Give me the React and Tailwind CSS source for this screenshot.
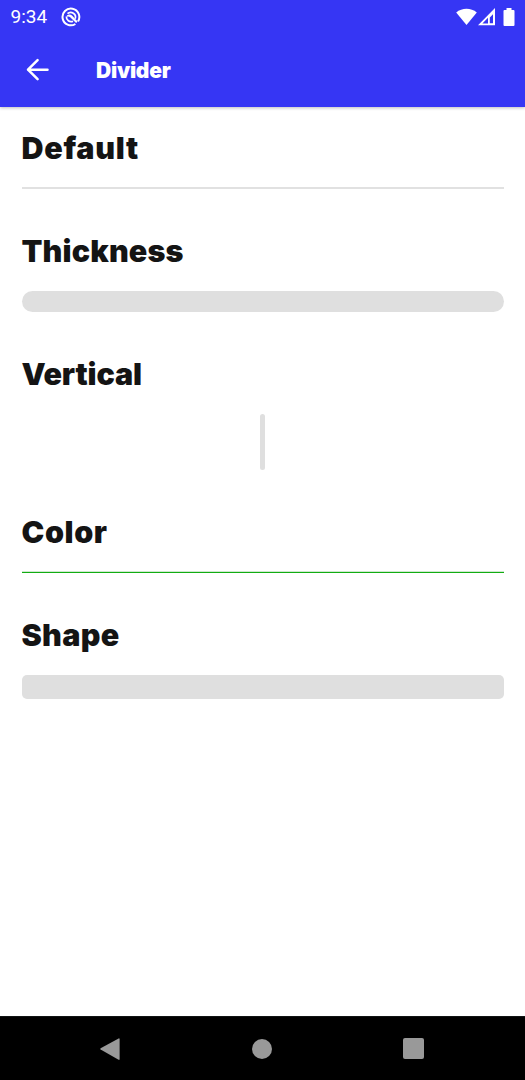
function Section({ title, spacing, className, children }) {
  return (
    <section className={className}>
      <h2 className={`mb-[19px] h-10 whitespace-nowrap text-[30.5px] leading-10 font-black text-[#141414] ${spacing}`}>{title}</h2>
      {children}
    </section>
  );
}

function StatusBar() {
  return (
    <div className="flex h-[33px] items-center justify-between pr-[10px] pl-[10.5px] font-['Roboto',sans-serif] text-white">
      <div className="flex items-center gap-[14px]">
        <span className="text-[19px] leading-[33px]">9:34</span>
        <svg className="h-5 w-5" viewBox="0 0 20 20" fill="none" stroke="currentColor">
          <path d="M14.4 17A8.4 8.4 0 1 1 17 14.4" strokeWidth="2" />
          <path d="M12 14.2A4.7 4.7 0 0 1 5.4 9.5M6.5 6.6A4.8 4.8 0 0 1 14.2 11.8" strokeWidth="1.7" />
          <path d="M5.8 8.6Q8.6 6.4 11 8.6L16.6 14.6L15.1 16.1L9.2 10.3Q7.6 8.9 5.8 9.8Z" fill="currentColor" stroke="none" />
        </svg>
      </div>
      <div className="flex items-center">
        <svg className="h-[18px] w-[22px]" viewBox="0 0 22 18" fill="currentColor">
          <path d="M.2 4.5C6-.5 15-.5 20.8 4.5L10.5 17Z" />
        </svg>
        <svg className="h-[18px] w-[18px]" viewBox="0 0 18 18" fill="currentColor" fillRule="evenodd">
          <path d="M0 17.2L17 0V17.2ZM4.4 15.4H10V9.7ZM11.8 15.2H15V6.3L11.8 9.5Z" />
        </svg>
        <svg className="ml-[7px] h-[18px] w-[12px]" viewBox="0 0 12 18" fill="currentColor">
          <path d="M3.5 0H8.5V2H10.5Q11.5 2 11.5 3V17Q11.5 18 10.5 18H1.5Q.5 18 .5 17V3Q.5 2 1.5 2H3.5Z" />
        </svg>
      </div>
    </div>
  );
}

export default function App() {
  return (
    <div className="flex h-[1080px] w-[525px] flex-col overflow-hidden bg-white font-['Inter',sans-serif]">
      <header className="h-[107px] shrink-0 bg-[#3636f4] text-white shadow-[0_1px_3px_rgba(0,0,0,0.25)]">
        <StatusBar />
        <div className="flex h-[74px] items-center pl-[26px]">
          <button aria-label="Back" className="block h-6 w-6">
            <svg className="h-6 w-6" viewBox="0 0 24 24" fill="none" stroke="currentColor" strokeWidth="2.5" strokeLinecap="round" strokeLinejoin="round">
              <path d="M11.6 2.2L2 11.7L11.6 21.2M2 11.7H21.5" />
            </svg>
          </button>
          <h1 className="ml-[46px] pt-px text-[21px] leading-7 font-black tracking-[-0.25px]">Divider</h1>
        </div>
      </header>
      <main className="grow px-[21.5px] pt-[20.5px]">
        <Section title="Default" spacing="tracking-[0.7px]" className="h-[103px]">
          <div className="h-[2px] bg-[#e1e1e1]" />
        </Section>
        <Section title="Thickness" spacing="tracking-[0.15px]" className="h-[123px]">
          <div className="mt-5 h-[21px] rounded-full bg-[#dfdfdf]" />
        </Section>
        <Section title="Vertical" spacing="tracking-[-0.15px]" className="h-[158px]">
          <div className="mx-auto mt-5 h-[56px] w-[5.5px] rounded-full bg-[#dfdfdf]" />
        </Section>
        <Section title="Color" spacing="tracking-[0.6px]" className="h-[103px]">
          <div className="h-[2px] border-t border-[#cfe8cf] bg-[#12ad12]" />
        </Section>
        <Section title="Shape" spacing="tracking-[0.3px]">
          <div className="mt-5 h-6 rounded-[5px] bg-[#dfdfdf]" />
        </Section>
      </main>
      <nav className="flex h-16 shrink-0 items-center justify-between border-t border-[#101414] bg-black pr-[101px] pl-[99px] text-[#999999]">
        <svg className="h-6 w-[22px]" viewBox="0 0 22 24" fill="currentColor"><path d="M1.6 11.3L19.6 1.4Q20.6 1.1 20.6 2.1V22Q20.6 23.2 19.6 22.8L1.6 12.6Q.8 12 1.6 11.3Z" /></svg>
        <div className="h-5 w-5 rounded-full bg-[#999999]" />
        <div className="h-[21px] w-[21px] rounded-[2px] bg-[#999999]" />
      </nav>
    </div>
  );
}
